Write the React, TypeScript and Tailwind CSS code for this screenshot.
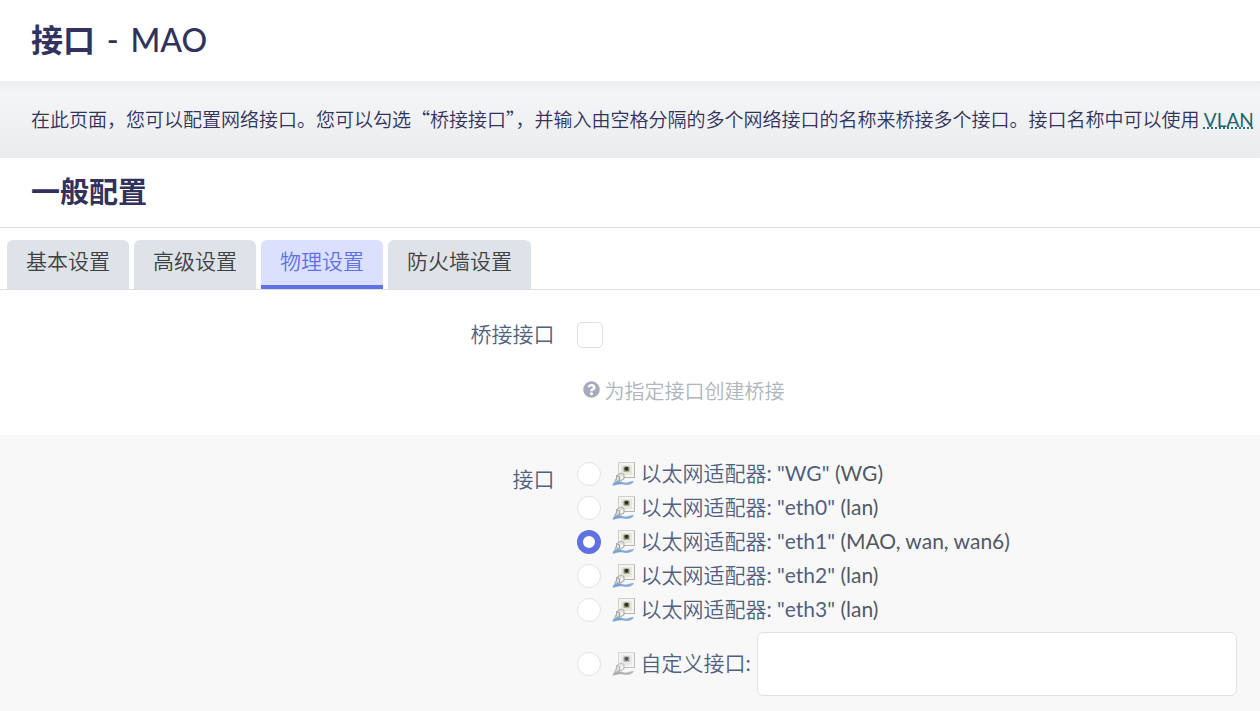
import { useState } from "react";
import { FaQuestionCircle } from "react-icons/fa";

const TABS = ["基本设置", "高级设置", "物理设置", "防火墙设置"];

const DEVICES = [
  { id: "WG", networks: "WG" },
  { id: "eth0", networks: "lan" },
  { id: "eth1", networks: "MAO, wan, wan6" },
  { id: "eth2", networks: "lan" },
  { id: "eth3", networks: "lan" },
];

const RADIO_CLASS =
  "size-6 shrink-0 appearance-none rounded-full border border-[#e2e3e5] bg-white checked:border-6 checked:border-[#5e72e4]";

function AdapterIcon({ disabled = false }: { disabled?: boolean }) {
  return (
    <svg
      className={`mr-1 ml-[11px] size-6 shrink-0 ${disabled ? "opacity-80 grayscale" : ""}`}
      viewBox="0 0 24 24"
      fill="none"
      aria-hidden="true"
    >
      <rect x="6.5" y="0.5" width="16" height="15" fill="#f4f4f1" stroke="#cfcfca" />
      <path d="M22.500 1v14.500H12" stroke="#b5b5af" />
      <rect x="9" y="3" width="11" height="10" fill="#e6e6e0" />
      <rect x="11.500" y="4.500" width="6" height="5.500" rx="1" fill="#8f9382" />
      <circle cx="14.500" cy="6.800" r="2" fill="#2c3020" />
      <path d="M12.500 9.500h4" stroke="#a9bd6e" />
      <path
        d="M0.500 23.500C1 20 3.500 18.500 7 19c3 .5 5 2 8 1.500 2-.4 4-1.500 7-1.500-1 2.500-4 4-8 4-3 0-4-1-7-.5-2 .3-4 1-6.500 1z"
        fill="#86aed8"
      />
      <path d="M1.500 23c2.500-2.500 5-2.500 8-1.500" stroke="#6b98c8" />
      <path d="M3 20c0-1.500.5-3 2-4" stroke="#b4b8bb" strokeWidth="1.500" />
      <path d="M4.500 13.500l4.500-2.500 3 1.500v4.500l-4.500 2.500-3-1.500z" fill="#dededc" stroke="#aaacac" />
      <path d="M4.500 13.500l3 1.500v4" stroke="#9a9c9c" />
      <path d="M8.500 15l2.500-1.500V16l-2.500 1.500z" fill="#fafafa" />
    </svg>
  );
}

export default function App() {
  const [tab, setTab] = useState("物理设置");
  const [bridge, setBridge] = useState(false);
  const [device, setDevice] = useState("eth1");
  const [custom, setCustom] = useState("");

  return (
    <main
      lang="zh-CN"
      className="overflow-hidden bg-white font-['Lato','Noto_Sans_CJK_SC',sans-serif] font-[350] text-[#525f7f]"
    >
      <h1 className="px-[31px] pt-4 pb-[17px] text-[32px] leading-[48px] font-bold text-[#32325d]">
        接口 <span className="mx-1 font-medium">-</span> <span className="font-medium">MAO</span>
      </h1>

      <p className="bg-linear-to-b from-[#eceef0] via-[#f4f5f7] via-15% to-[#ebecee] px-[31px] py-6 font-['Noto_Sans_CJK_SC',sans-serif] text-[19px] leading-7 whitespace-nowrap text-[#32325d]">
        在此页面，您可以配置网络接口。您可以勾选“桥接接口”，并输入由空格分隔的多个网络接口的名称来桥接多个接口。接口名称中可以使用{" "}
        <abbr
          title="虚拟局域网"
          className="font-['Lato',sans-serif] font-normal text-[#1b6670] underline decoration-dotted"
        >
          VLAN
        </abbr>
      </p>

      <section>
        <h2 className="border-b border-[#dddfe2] px-[31px] pt-[14px] pb-[15px] text-[29px] leading-10 font-bold text-[#32325d]">
          一般配置
        </h2>

        <div role="tablist" className="flex gap-[5px] border-b border-[#dddfe2] px-[7px] pt-3">
          {TABS.map((name) => (
            <button
              key={name}
              type="button"
              role="tab"
              aria-selected={tab === name}
              onClick={() => setTab(name)}
              className={`rounded-t-md border-b-4 px-[19px] pt-[1px] pb-1 text-[21px] leading-10 ${
                tab === name
                  ? "border-[#5e72e4] bg-[#dce0ff] text-[#5e72e4]"
                  : "border-[#dee2e9] bg-[#dee2e9] text-[#404040]"
              }`}
            >
              {name}
            </button>
          ))}
        </div>

        <div className="flex py-7 text-[21px]">
          <label htmlFor="bridge" className="w-[44%] shrink-0 text-right leading-8">
            桥接接口
          </label>
          <div className="pl-[23px]">
            <input
              id="bridge"
              type="checkbox"
              checked={bridge}
              onChange={(e) => setBridge(e.target.checked)}
              className="mt-1 block size-[26px] appearance-none rounded-[5px] border border-[#dddfe3] bg-white checked:bg-[#5e72e4]"
            />
            <p className="mt-[27px] flex gap-1 pl-[6px] text-[20px] leading-8 text-[#adb5bd]">
              <FaQuestionCircle className="mt-[6px] size-[17px] text-[#a5aabd]" />
              为指定接口创建桥接
            </p>
          </div>
        </div>

        <div className="flex bg-[#f8f8f9] pt-[22px] pb-4 text-[21px]">
          <span id="device-label" className="w-[44%] shrink-0 pt-[6px] text-right leading-8">
            接口
          </span>
          <div role="radiogroup" aria-labelledby="device-label" className="min-w-0 flex-1 px-[23px]">
            {DEVICES.map((d) => (
              <label key={d.id} className="flex h-[34px] items-center leading-8">
                <input
                  type="radio"
                  name="device"
                  checked={device === d.id}
                  onChange={() => setDevice(d.id)}
                  className={RADIO_CLASS}
                />
                <AdapterIcon />
                <span className="pb-0.5">
                  以太网适配器
                  <span className="font-normal">
                    : "{d.id}" <span className="text-[#525863]">({d.networks})</span>
                  </span>
                </span>
              </label>
            ))}
            <div className="mt-[5px] flex items-center gap-[6px]">
              <label className="flex shrink-0 items-center leading-8">
                <input
                  type="radio"
                  name="device"
                  checked={device === "custom"}
                  onChange={() => setDevice("custom")}
                  className={RADIO_CLASS}
                />
                <AdapterIcon disabled />
                <span className="pb-0.5">
                  自定义接口<span className="font-normal">:</span>
                </span>
              </label>
              <input
                type="text"
                aria-label="自定义接口"
                value={custom}
                onChange={(e) => setCustom(e.target.value)}
                className="h-16 min-w-0 flex-1 rounded-md border border-[#dee2e6] bg-white px-4 outline-none"
              />
            </div>
          </div>
        </div>
      </section>
    </main>
  );
}
